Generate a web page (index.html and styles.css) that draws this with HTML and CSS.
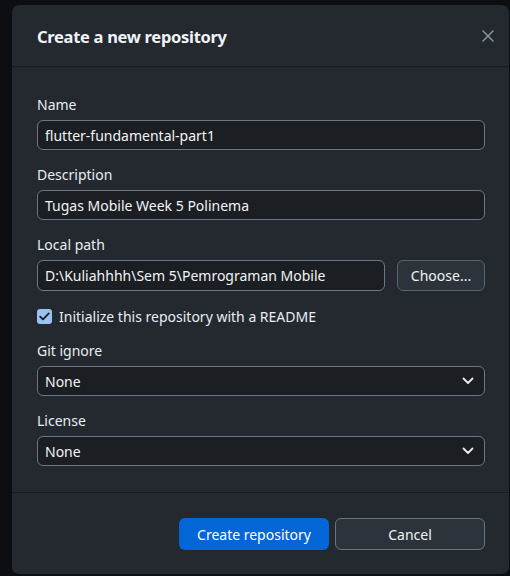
FILE: index.html
```html
<!DOCTYPE html>
<html>
<head>
<meta charset="utf-8">
<link rel="stylesheet" href="styles.css">
</head>
<body>
<div class="dialog">
  <div class="header">
    <h1 class="title">Create a new repository</h1>
    <span class="close" aria-label="Close">
      <svg width="12" height="12" viewBox="0 0 12 12"><path d="M1 1L11 11M11 1L1 11" stroke="#8b949e" stroke-width="1.5" stroke-linecap="round"/></svg>
    </span>
  </div>
  <div class="body">
    <div class="group">
      <div class="label">Name</div>
      <div class="input">flutter-fundamental-part1</div>
    </div>
    <div class="group">
      <div class="label">Description</div>
      <div class="input">Tugas Mobile Week 5 Polinema</div>
    </div>
    <div class="group">
      <div class="label">Local path</div>
      <div class="path-row">
        <div class="input grow">D:\Kuliahhhh\Sem 5\Pemrograman Mobile</div>
        <div class="btn choose">Choose...</div>
      </div>
    </div>
    <div class="check-row">
      <span class="checkbox">
        <svg width="11" height="9" viewBox="0 0 11 9"><path d="M1.2 4.6L4 7.4L9.8 1.4" fill="none" stroke="#1b1f23" stroke-width="1.8" stroke-linecap="round" stroke-linejoin="round"/></svg>
      </span>
      <span class="check-label">Initialize this repository with a README</span>
    </div>
    <div class="group">
      <div class="label">Git ignore</div>
      <div class="input select"><span>None</span>
        <svg width="12" height="8" viewBox="0 0 12 8"><path d="M1.5 1.5L6 6L10.5 1.5" fill="none" stroke="#e6edf3" stroke-width="1.8" stroke-linecap="round" stroke-linejoin="round"/></svg>
      </div>
    </div>
    <div class="group">
      <div class="label">License</div>
      <div class="input select"><span>None</span>
        <svg width="12" height="8" viewBox="0 0 12 8"><path d="M1.5 1.5L6 6L10.5 1.5" fill="none" stroke="#e6edf3" stroke-width="1.8" stroke-linecap="round" stroke-linejoin="round"/></svg>
      </div>
    </div>
  </div>
  <div class="footer">
    <div class="btn primary">Create repository</div>
    <div class="btn secondary">Cancel</div>
  </div>
</div>
</body>
</html>
```
FILE: styles.css
```css
html, body {
  margin: 0;
  padding: 0;
  background: #0c0e11;
  width: 510px;
  height: 576px;
  overflow: hidden;
}
body {
  font-family: "Noto Sans", "Open Sans", sans-serif;
  font-size: 14px;
  color: #e6edf3;
}
.dialog {
  margin: 5px 1px 0 12px;
  height: 569px;
  background: #24292f;
  border-radius: 7px;
  display: flex;
  flex-direction: column;
}
.header {
  height: 62px;
  border-bottom: 1px solid #181b1f;
  display: flex;
  align-items: center;
  justify-content: space-between;
  padding: 0 15px 0 25px;
  box-sizing: border-box;
}
.title {
  margin: 0;
  font-size: 16.5px;
  font-weight: 700;
  color: #f0f3f6;
  letter-spacing: -0.3px;
  position: relative;
  top: 1px;
}
.close {
  display: flex;
  width: 12px;
  height: 12px;
}
.body {
  padding: 28px 24px 0 25px;
  flex: 1;
}
.group {
  margin-bottom: 15px;
}
.label {
  height: 20px;
  line-height: 20px;
  margin-bottom: 5px;
  color: #e6edf3;
}
.input {
  height: 30px;
  box-sizing: border-box;
  border: 1px solid #6e7681;
  border-radius: 6px;
  background: #1b1f23;
  padding: 0 7px;
  display: flex;
  align-items: center;
  color: #f0f3f6;
}
.path-row {
  display: flex;
  gap: 12px;
}
.grow { flex: 1; height: 31px; }
.btn {
  box-sizing: border-box;
  display: flex;
  align-items: center;
  justify-content: center;
  border-radius: 6px;
  color: #f0f3f6;
}
.choose {
  width: 88px;
  height: 31px;
  background: #2d333b;
  border: 1px solid #5a626c;
}
.check-row {
  display: flex;
  align-items: center;
  height: 20px;
  margin: 15px 0 15px;
}
.checkbox {
  width: 15px;
  height: 15px;
  border-radius: 3px;
  background: #99c1f1;
  display: flex;
  align-items: center;
  justify-content: center;
  margin-right: 7px;
}
.select {
  justify-content: space-between;
  padding-right: 10px;
}
.footer {
  border-top: 1px solid #181b1f;
  height: 82px;
  box-sizing: border-box;
  padding: 25px 24px 0 0;
  display: flex;
  justify-content: flex-end;
  gap: 6px;
}
.primary {
  width: 150px;
  height: 32px;
  background: #0366d6;
  color: #ffffff;
}
.secondary {
  width: 150px;
  height: 32px;
  background: #2d333b;
  border: 1px solid #6a737d;
}
```
